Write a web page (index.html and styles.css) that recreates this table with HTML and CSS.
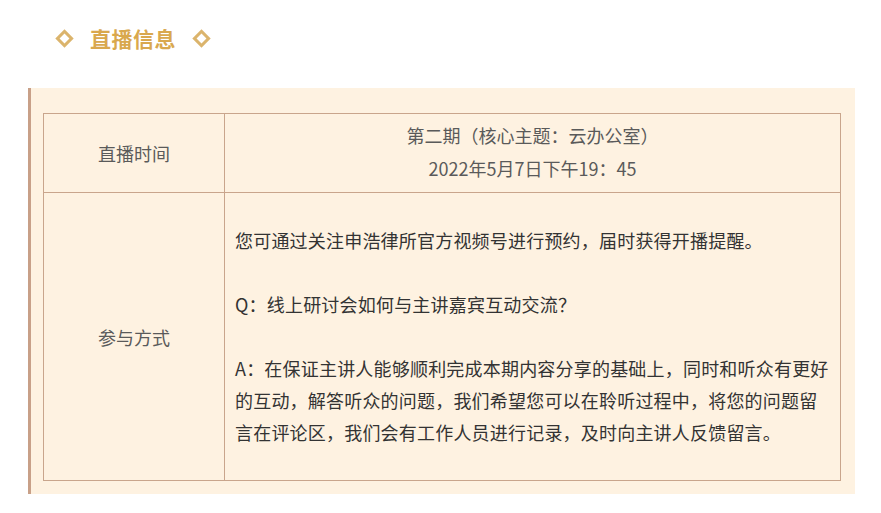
FILE: index.html
```html
<!DOCTYPE html>
<html lang="zh-CN">
<head>
<meta charset="utf-8">
<title>直播信息</title>
<link rel="stylesheet" href="styles.css">
</head>
<body>
<div class="section">
  <div class="heading">
    <span class="diamond"></span>
    <h2 class="heading-text">直播信息</h2>
    <span class="diamond"></span>
  </div>
  <div class="panel">
    <table class="info">
      <tr class="row-time">
        <td class="label">直播时间</td>
        <td class="value center">
          <p>第二期（核心主题：云办公室）</p>
          <p>2022年5月7日下午19：45</p>
        </td>
      </tr>
      <tr class="row-join">
        <td class="label">参与方式</td>
        <td class="value body">
          <p>您可通过关注申浩律所官方视频号进行预约，届时获得开播提醒。</p>
          <p><br></p>
          <p>Q：线上研讨会如何与主讲嘉宾互动交流？</p>
          <p><br></p>
          <p>A：在保证主讲人能够顺利完成本期内容分享的基础上，同时和听众有更好的互动，解答听众的问题，我们希望您可以在聆听过程中，将您的问题留言在评论区，我们会有工作人员进行记录，及时向主讲人反馈留言。</p>
        </td>
      </tr>
    </table>
  </div>
</div>
</body>
</html>
```

FILE: styles.css
```css
html, body {
  margin: 0;
  padding: 0;
  background: #ffffff;
}

body {
  font-family: "Noto Sans CJK SC", "Noto Sans", sans-serif;
  width: 881px;
}

.section {
  padding: 0 26px 0 28px;
}

.heading {
  display: flex;
  align-items: center;
  gap: 19px;
  height: 76px;
  margin-bottom: 12px;
  padding-left: 30px;
}

.diamond {
  width: 7px;
  height: 7px;
  border: 3px solid #dbb46c;
  transform: rotate(45deg);
}

.heading-text {
  margin: 0;
  font-size: 21px;
  font-weight: 700;
  color: #d9a84e;
  line-height: 30px;
  letter-spacing: 0.5px;
}

.panel {
  background: #fef2e1;
  border-left: 3px solid #c8a088;
  padding: 25px 14px 13px 12px;
}

.info {
  width: 100%;
  border-collapse: collapse;
  font-size: 18px;
  line-height: 32px;
}

.info td {
  border: 1px solid #c9a58c;
  padding: 0;
}

.info p {
  margin: 0;
}

.label {
  width: 180px;
  text-align: center;
  vertical-align: middle;
  color: #5a5a5a;
}

.value.center {
  text-align: center;
  color: #5a5a5a;
  padding: 5px 10px 8px;
  height: 64px;
}

.value.center p + p {
  margin-top: 1px;
}

.value.body {
  color: #333333;
  padding: 31px 8px 32px 10px;
  text-align: left;
  letter-spacing: 0.2px;
}
```
